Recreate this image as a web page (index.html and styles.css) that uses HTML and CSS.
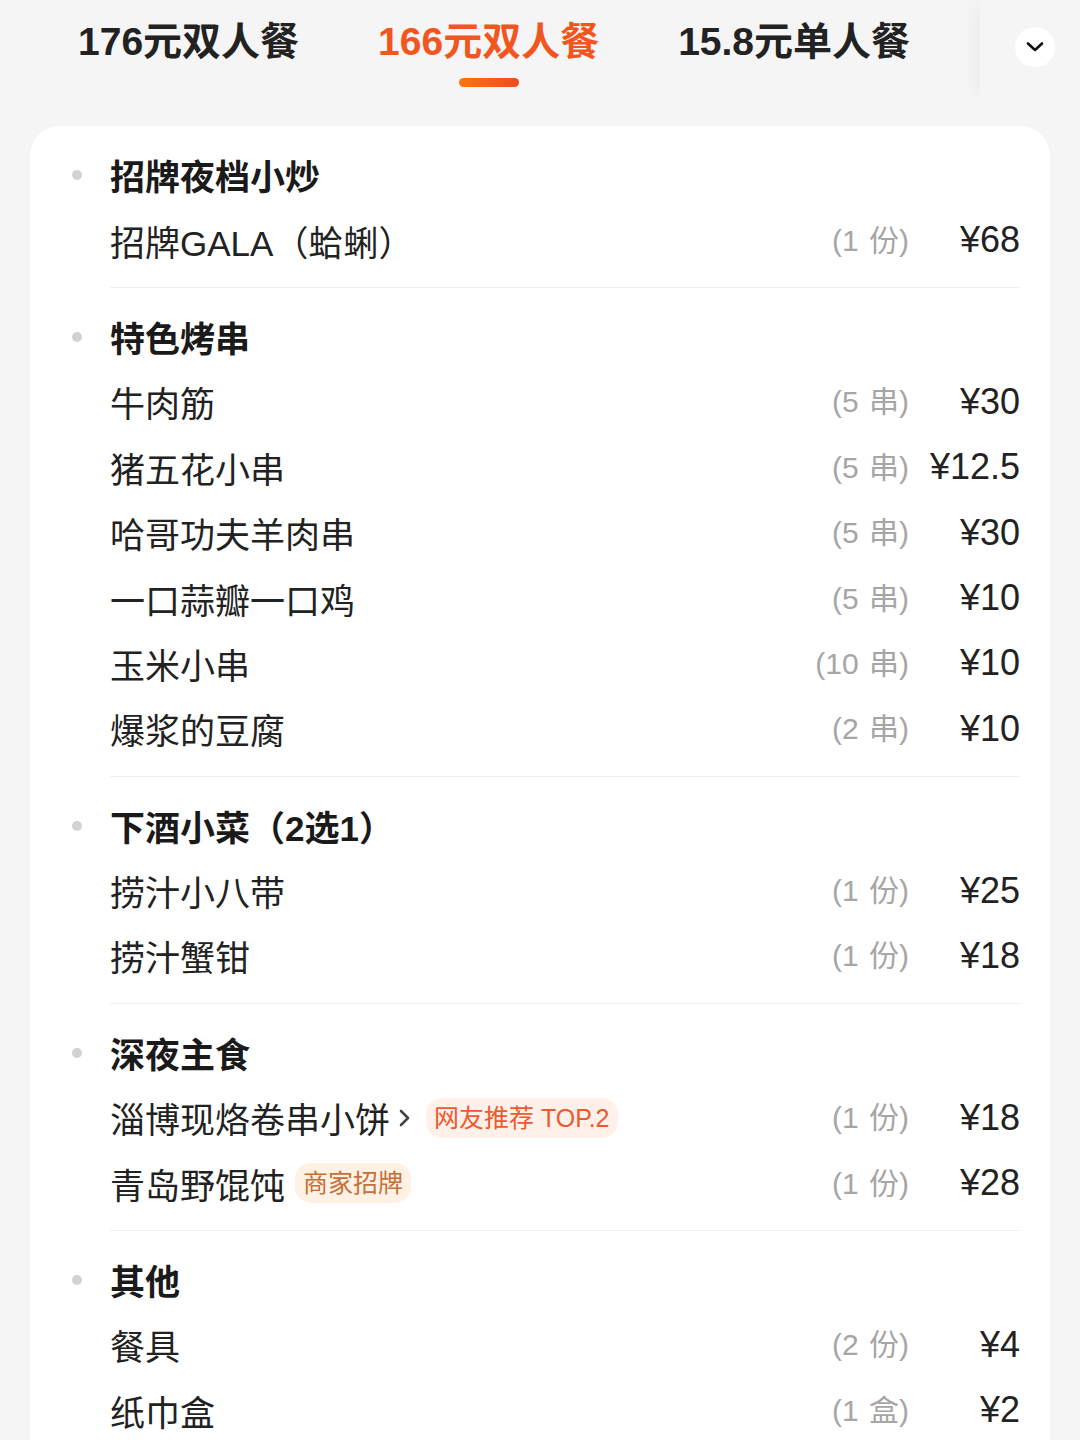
FILE: index.html
```html
<!DOCTYPE html>
<html lang="zh-CN">
<head>
  <meta charset="UTF-8" />
  <meta name="viewport" content="width=device-width, initial-scale=1.0"/>
  <title>套餐详情</title>
  <link rel="stylesheet" href="styles.css">
</head>
<body>
  <div class="tabs">
    <div class="tab-list">
      <div class="tab">176元双人餐</div>
      <div class="tab active">166元双人餐</div>
      <div class="tab">15.8元单人餐</div>
    </div>
    <div class="tab-more">
      <span class="more-btn">
        <svg width="20" height="12" viewBox="0 0 20 12"><path d="M3 2.5 L10 9 L17 2.5" fill="none" stroke="#111" stroke-width="2.6" stroke-linecap="round" stroke-linejoin="round"/></svg>
      </span>
    </div>
  </div>

  <div class="menu-card">
    <div class="section">
      <div class="section-title">招牌夜档小炒</div>
      <div class="item"><span class="name">招牌GALA（蛤蜊）</span><span class="qty">(1 份)</span><span class="price">¥68</span></div>
    </div>

    <div class="section">
      <div class="section-title">特色烤串</div>
      <div class="item"><span class="name">牛肉筋</span><span class="qty">(5 串)</span><span class="price">¥30</span></div>
      <div class="item"><span class="name">猪五花小串</span><span class="qty">(5 串)</span><span class="price">¥12.5</span></div>
      <div class="item"><span class="name">哈哥功夫羊肉串</span><span class="qty">(5 串)</span><span class="price">¥30</span></div>
      <div class="item"><span class="name">一口蒜瓣一口鸡</span><span class="qty">(5 串)</span><span class="price">¥10</span></div>
      <div class="item"><span class="name">玉米小串</span><span class="qty">(10 串)</span><span class="price">¥10</span></div>
      <div class="item"><span class="name">爆浆的豆腐</span><span class="qty">(2 串)</span><span class="price">¥10</span></div>
    </div>

    <div class="section">
      <div class="section-title">下酒小菜（2选1）</div>
      <div class="item"><span class="name">捞汁小八带</span><span class="qty">(1 份)</span><span class="price">¥25</span></div>
      <div class="item"><span class="name">捞汁蟹钳</span><span class="qty">(1 份)</span><span class="price">¥18</span></div>
    </div>

    <div class="section">
      <div class="section-title">深夜主食</div>
      <div class="item">
        <span class="name">淄博现烙卷串小饼
          <svg class="arrow" width="14" height="22" viewBox="0 0 14 22"><path d="M3 4 L10 11 L3 18" fill="none" stroke="#444" stroke-width="2.6" stroke-linecap="round" stroke-linejoin="round"/></svg>
          <span class="tag tag-hot">网友推荐 TOP.2</span>
        </span>
        <span class="qty">(1 份)</span><span class="price">¥18</span>
      </div>
      <div class="item">
        <span class="name">青岛野馄饨<span class="tag tag-shop">商家招牌</span></span>
        <span class="qty">(1 份)</span><span class="price">¥28</span>
      </div>
    </div>

    <div class="section">
      <div class="section-title">其他</div>
      <div class="item"><span class="name">餐具</span><span class="qty">(2 份)</span><span class="price">¥4</span></div>
      <div class="item"><span class="name">纸巾盒</span><span class="qty">(1 盒)</span><span class="price">¥2</span></div>
    </div>
  </div>
</body>
</html>
```

FILE: styles.css
```css
body {
  margin: 0;
  background-color: #f5f5f5;
  font-family: "Liberation Sans", "Noto Sans CJK SC", sans-serif;
  color: #222;
  height: 1440px;
  overflow: hidden;
}

/* Tabs */
.tabs {
  display: flex;
  height: 126px;
}

.tab-list {
  flex: 1;
  display: flex;
  gap: 79px;
  padding-left: 78px;
}

.tab {
  font-size: 39px;
  line-height: 1;
  font-weight: 600;
  padding-top: 22px;
  color: #222;
  display: flex;
  flex-direction: column;
  align-items: center;
  white-space: nowrap;
}

.tab.active {
  color: #f2561f;
}

.tab.active::after {
  content: "";
  width: 60px;
  height: 9px;
  margin-top: 17px;
  border-radius: 5px;
  background: linear-gradient(90deg, #ff7410, #f24a1f);
}

.tab-more {
  width: 100px;
  height: 100px;
  background: #f5f5f5;
  box-shadow: -14px 0 14px -8px rgba(0, 0, 0, 0.04);
  padding: 27px 0 0 35px;
  box-sizing: border-box;
}

.more-btn {
  width: 40px;
  height: 40px;
  border-radius: 50%;
  background: #fff;
  display: flex;
  align-items: center;
  justify-content: center;
}

/* Menu card */
.menu-card {
  background: #fff;
  margin: 0 30px;
  border-radius: 30px 30px 0 0;
  padding-right: 30px;
}

.section {
  margin-left: 80px;
  padding: 16px 0 14px;
  border-bottom: 1px solid #efefef;
}

.section-title,
.item {
  height: 65.4px;
  display: flex;
  align-items: center;
}

.section-title {
  position: relative;
  font-size: 35px;
  font-weight: 700;
  color: #1a1a1a;
}

.section-title::before {
  content: "";
  position: absolute;
  left: -38px;
  top: 28px;
  width: 10px;
  height: 10px;
  border-radius: 50%;
  background: #d2d2d2;
}

.item .name {
  flex: 1;
  font-size: 35px;
  color: #222;
  display: flex;
  align-items: center;
  white-space: nowrap;
}

.arrow {
  margin-left: 8px;
}

.qty {
  font-size: 30px;
  color: #a6a6a6;
  text-align: right;
  word-spacing: 2px;
  padding-bottom: 5px;
}

.price {
  width: 111px;
  text-align: right;
  font-size: 36px;
  color: #222;
}

.tag {
  font-size: 25px;
  height: 40px;
  line-height: 40px;
  padding: 0 8px;
  border-radius: 16px;
  margin-left: 14px;
}

.tag-hot {
  background: #fff1ea;
  color: #ec5a2e;
}

.tag-shop {
  background: #fff1e4;
  color: #c4703a;
  margin-left: 10px;
}
```
